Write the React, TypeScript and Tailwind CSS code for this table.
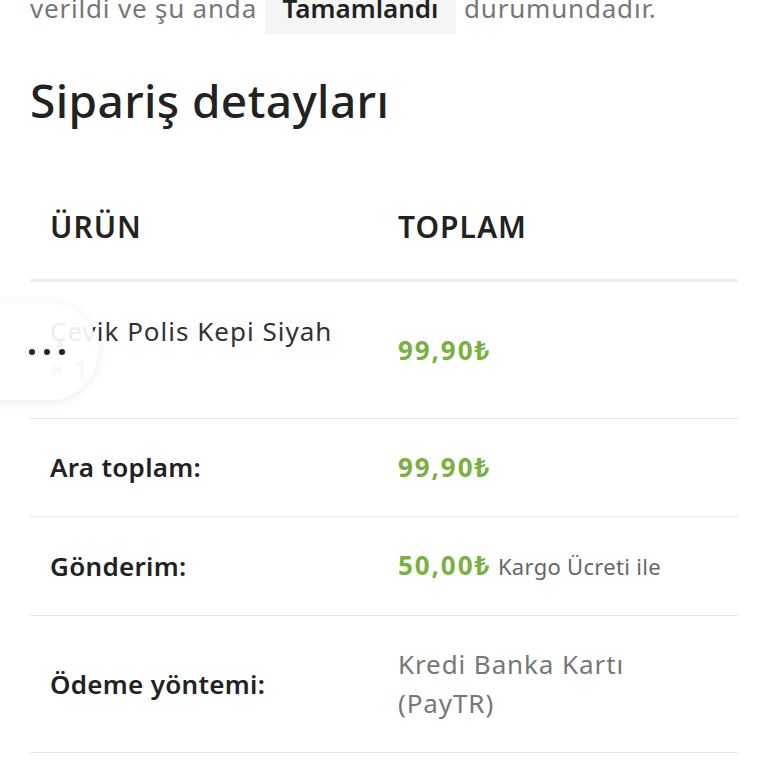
import React from "react";

const Price: React.FC<{ value: string }> = ({ value }) => (
    <span className="font-bold tracking-[1.9px] text-[#79b03f]">{value}</span>
);

const App: React.FC = () => {
    return (
        <div className="relative h-[768px] w-[768px] overflow-hidden bg-white font-['Noto_Sans',sans-serif] text-[#222]">
            <div className="px-[30px]">
                <p className="-mt-[16px] text-[26px] leading-[48px] tracking-[0.8px] text-[#777]">
                    verildi ve şu anda{" "}
                    <mark className="bg-[#f5f5f5] px-[18px] py-[8px] font-semibold tracking-normal text-[#222]">Tamamlandı</mark>{" "}
                    durumundadır.
                </p>

                <h2 className="mt-[40px] text-[46px] font-medium leading-[56px] tracking-[0.4px] text-[#222]">Sipariş detayları</h2>

                <table className="mt-[46px] w-full border-collapse text-left text-[26px]">
                    <thead>
                        <tr className="border-b-[3px] border-[#ececec]">
                            <th className="w-[348px] px-[20px] py-[32px] text-[30px] font-semibold leading-[41px] tracking-[1px]">ÜRÜN</th>
                            <th className="px-[20px] py-[32px] text-[30px] font-semibold leading-[41px] tracking-[1px]">TOPLAM</th>
                        </tr>
                    </thead>
                    <tbody>
                        <tr className="border-b border-[#e5e5e5]">
                            <td className="px-[20px] py-[30px] leading-[38px] tracking-[1px] text-[#333]">
                                <div>Çevik Polis Kepi Siyah</div>
                                <div className="text-[#999]">× 1</div>
                            </td>
                            <td className="px-[20px] py-[30px] leading-[38px]">
                                <Price value="99,90₺" />
                            </td>
                        </tr>
                        <tr className="border-b border-[#e5e5e5]">
                            <th className="px-[20px] py-[30px] font-semibold leading-[37px] tracking-[0.3px]">Ara toplam:</th>
                            <td className="px-[20px] py-[30px] leading-[37px]">
                                <Price value="99,90₺" />
                            </td>
                        </tr>
                        <tr className="border-b border-[#e5e5e5]">
                            <th className="px-[20px] py-[30px] font-semibold leading-[37px] tracking-[0.3px]">Gönderim:</th>
                            <td className="px-[20px] py-[30px] leading-[37px]">
                                <Price value="50,00₺" />{" "}
                                <span className="text-[22px] tracking-[0.3px] text-[#666]">Kargo Ücreti ile</span>
                            </td>
                        </tr>
                        <tr className="border-b border-[#e5e5e5]">
                            <th className="px-[20px] py-[30px] font-semibold leading-[39px] tracking-[0.3px]">Ödeme yöntemi:</th>
                            <td className="px-[20px] py-[29px] leading-[39px] tracking-[0.9px] text-[#777]">
                                Kredi Banka Kartı
                                <br />
                                (PayTR)
                            </td>
                        </tr>
                    </tbody>
                </table>
            </div>

            <button
                type="button"
                className="absolute left-[-40px] top-[303px] flex h-[97px] w-[138px] items-center justify-end rounded-r-full bg-white/90 pr-[33px] shadow-[0_2px_12px_rgba(0,0,0,0.08)]"
            >
                <span className="flex gap-[9px]">
                    <span className="h-[6px] w-[6px] rounded-full bg-[#222]"></span>
                    <span className="h-[6px] w-[6px] rounded-full bg-[#222]"></span>
                    <span className="h-[6px] w-[6px] rounded-full bg-[#222]"></span>
                </span>
            </button>
        </div>
    );
};

export default App;
